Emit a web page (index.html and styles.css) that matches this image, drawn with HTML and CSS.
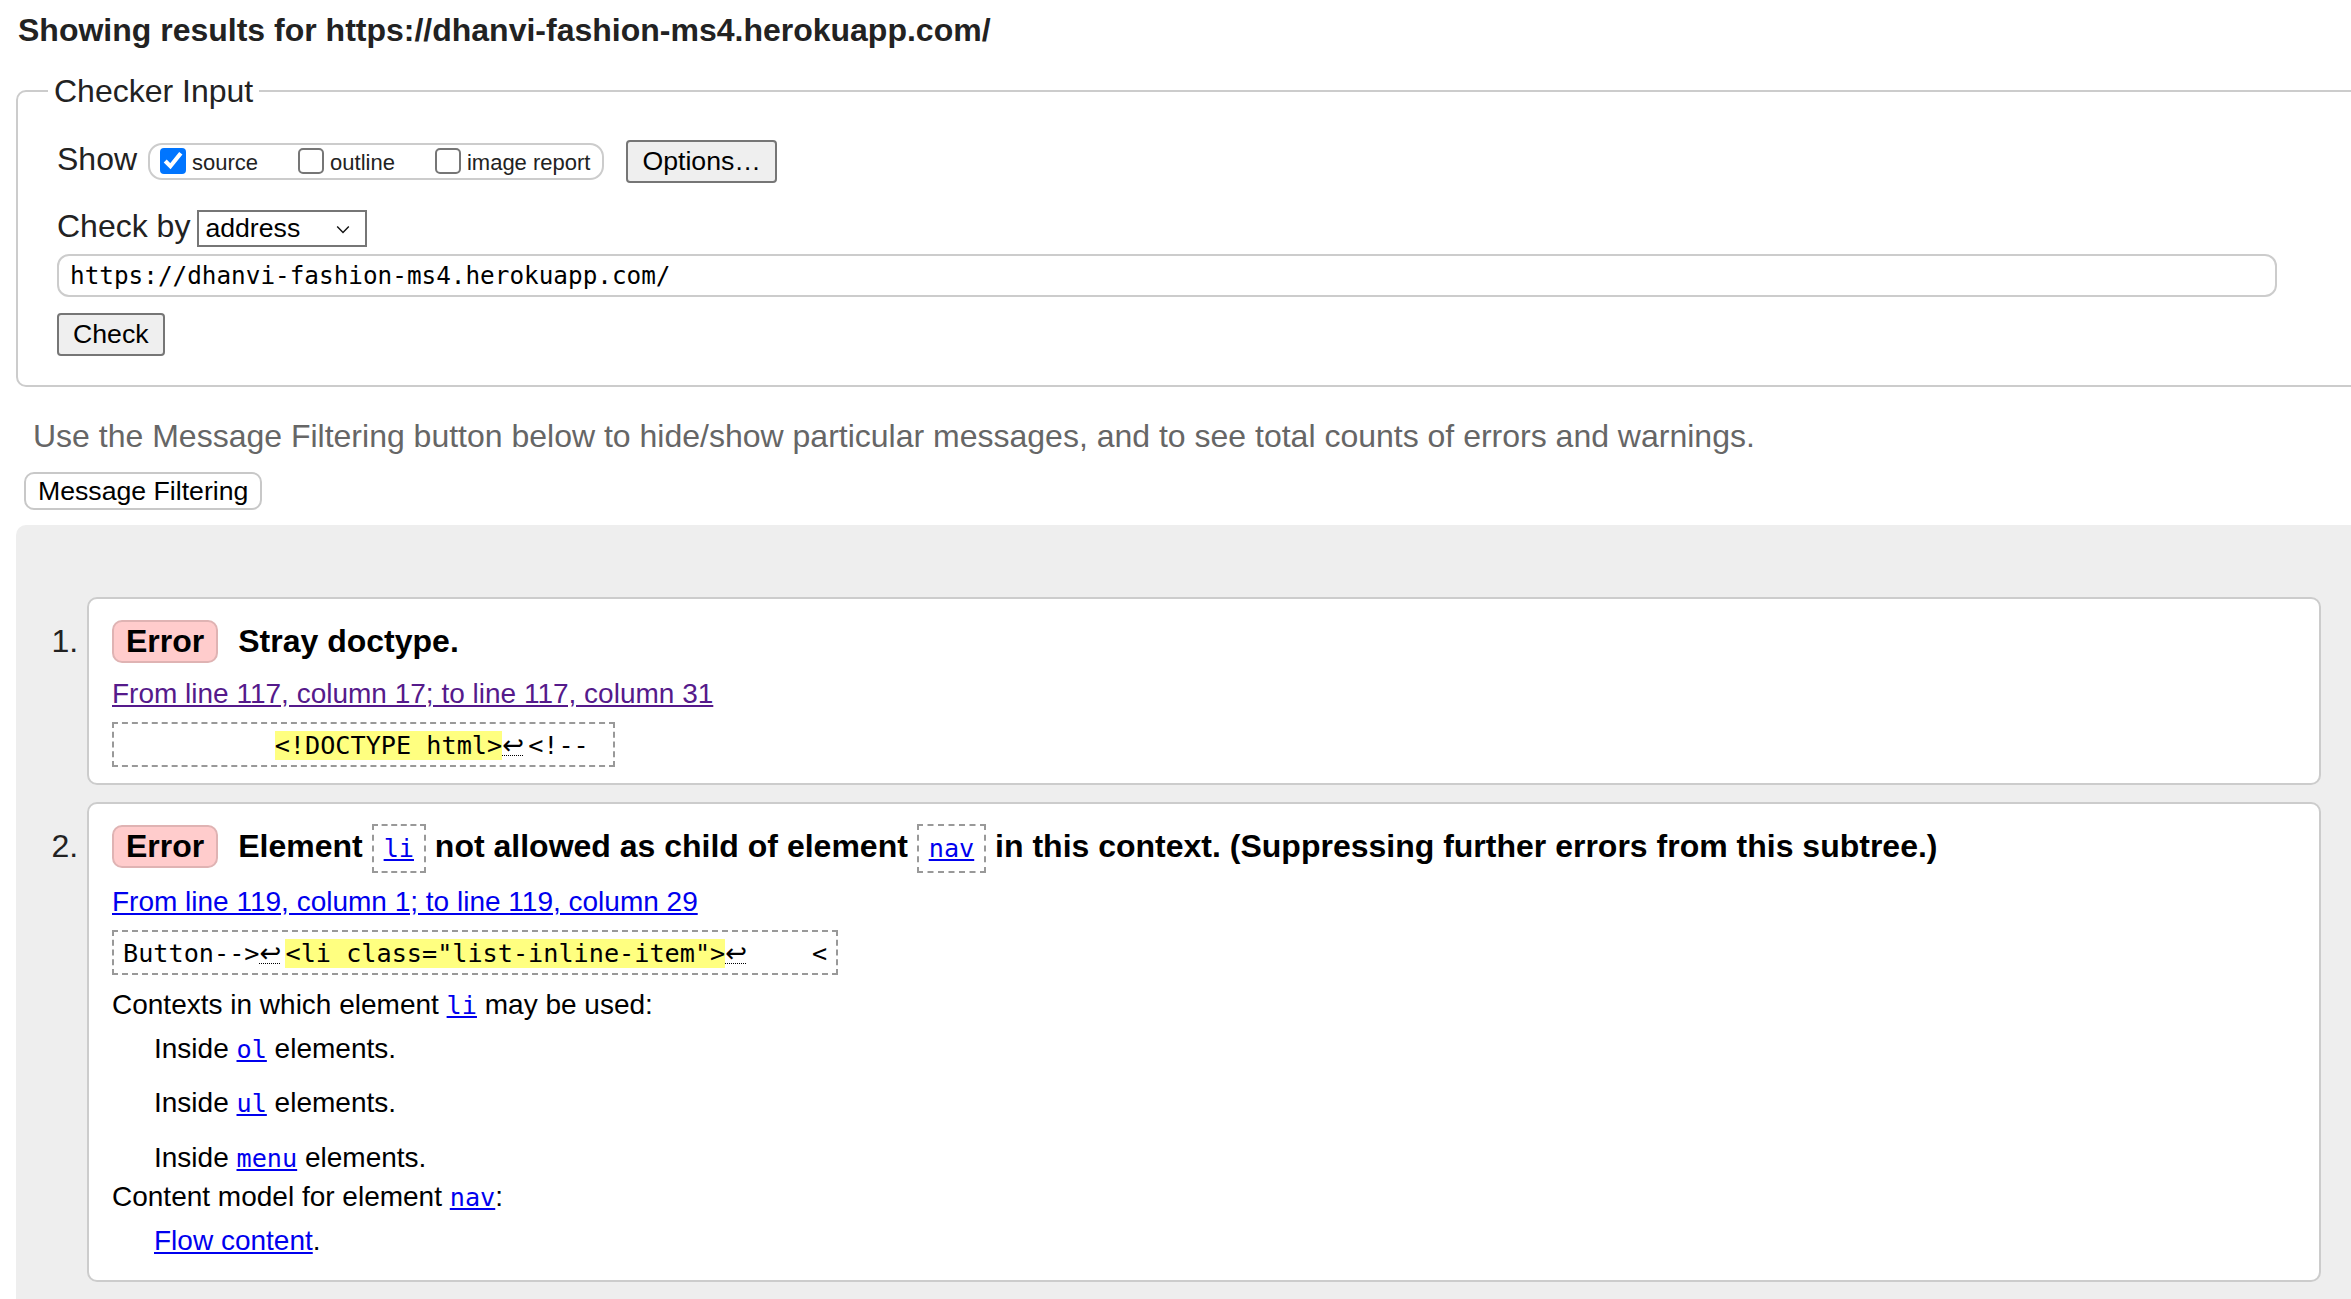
FILE: index.html
```html
<!DOCTYPE html>
<html lang="en">
<head>
<meta charset="utf-8">
<title>Showing results for https://dhanvi-fashion-ms4.herokuapp.com/ - Nu Html Checker</title>
<link rel="stylesheet" href="styles.css">
</head>
<body>
<div class="page">
  <h2 class="title">Showing results for https://dhanvi-fashion-ms4.herokuapp.com/</h2>
  <fieldset class="checker">
    <legend class="legend">Checker Input</legend>
    <div class="row show-row">
      <span class="lbl lbl-show">Show</span>
      <span class="group">
        <label class="opt"><input class="cb" type="checkbox" checked>source</label>
        <label class="opt"><input class="cb" type="checkbox">outline</label>
        <label class="opt"><input class="cb" type="checkbox">image report</label>
      </span>
      <button class="btn btn-options" type="button">Options…</button>
    </div>
    <div class="row by-row">
      <span class="lbl lbl-by">Check by</span>
      <span class="sel-wrap">
        <select class="sel"><option>address</option></select>
        <svg class="sel-arrow" width="7" height="5" viewBox="0 0 7 5" aria-hidden="true"><path d="M0.6 0.8 L3.5 3.8 L6.4 0.8" fill="none" stroke="#111" stroke-width="0.7"/></svg>
      </span>
    </div>
    <input class="url" type="text" value="https://dhanvi-fashion-ms4.herokuapp.com/">
    <div class="check-wrap"><button class="btn" type="button">Check</button></div>
  </fieldset>
  <p class="hint">Use the Message Filtering button below to hide/show particular messages, and to see total counts of errors and warnings.</p>
  <button class="filter-btn" type="button">Message Filtering</button>
  <div class="results">
    <ol class="messages">
      <li class="msg">
        <p class="head"><strong class="badge">Error</strong><span class="msg-text">Stray doctype.</span></p>
        <p class="loc"><a class="loc-link visited" href="#l117">From line 117, column 17; to line 117, column 31</a></p>
        <p class="extract"><code class="ext-code">          <b class="hl">&lt;!DOCTYPE html&gt;</b><abbr class="lf" title="line feed">↩</abbr>&lt;!-- </code></p>
      </li>
      <li class="msg">
        <p class="head"><strong class="badge">Error</strong><span class="msg-text">Element <code class="elbox"><a class="elink" href="#li">li</a></code> not allowed as child of element <code class="elbox"><a class="elink" href="#nav">nav</a></code> in this context. (Suppressing further errors from this subtree.)</span></p>
        <p class="loc"><a class="loc-link" href="#l119">From line 119, column 1; to line 119, column 29</a></p>
        <p class="extract"><code class="ext-code">Button--&gt;<abbr class="lf" title="line feed">↩</abbr><b class="hl">&lt;li class="list-inline-item"&gt;</b><abbr class="lf" title="line feed">↩</abbr>    &lt;</code></p>
        <dl class="details">
          <dt class="dt dt-first">Contexts in which element <a class="mono-link" href="#li">li</a> may be used:</dt>
          <dd class="dd"><p class="dd-p dd-p1">Inside <a class="mono-link" href="#ol">ol</a> elements.</p><p class="dd-p dd-p2">Inside <a class="mono-link" href="#ul">ul</a> elements.</p><p class="dd-p dd-p3">Inside <a class="mono-link" href="#menu">menu</a> elements.</p></dd>
          <dt class="dt dt-second">Content model for element <a class="mono-link" href="#nav">nav</a>:</dt>
          <dd class="dd dd-last"><p class="dd-p dd-p4"><a class="plain-link" href="#flow">Flow content</a>.</p></dd>
        </dl>
      </li>
      <li class="msg msg-more"></li>
    </ol>
  </div>
</div>
</body>
</html>
```
FILE: styles.css
```css
html, body {
  margin: 0;
  padding: 0;
  overflow: hidden;
  background: #fff;
}
body {
  font-family: "Liberation Sans", Arial, sans-serif;
  color: #222;
}
.page {
  zoom: 2;
  width: 1220px;
  padding-left: 8px;
}
.title {
  font-size: 16px;
  font-weight: bold;
  line-height: 18.4px;
  margin: 6px 0 0 1px;
  color: #222;
}
.checker {
  margin: 11.9px 0 0 0;
  border: 1px solid #ccc;
  border-radius: 5px;
  padding: 15.3px 0 14.5px 19.5px;
  min-width: 0;
}
.legend {
  font-size: 16px;
  line-height: 18.4px;
  padding: 0 3px;
  margin-left: -4.5px;
  color: #222;
}
.row {
  display: flex;
  align-items: center;
}
.show-row {
  height: 21.5px;
}
.lbl {
  font-size: 16px;
  line-height: 18.4px;
}
.lbl-show {
  margin-right: 5.5px;
  margin-bottom: 2px;
}
.group {
  display: inline-flex;
  align-items: center;
  box-sizing: border-box;
  height: 18.5px;
  border: 1px solid #ccc;
  border-radius: 7px;
  padding: 0 6px 0 1px;
  font-size: 11px;
  color: #222;
}
.opt {
  display: inline-flex;
  align-items: flex-end;
  margin-right: 16px;
  line-height: 13px;
  padding-top: 1px;
}
.opt:last-child {
  margin-right: 0;
}
.cb {
  margin: 0 3px 1px 4px;
  width: 13px;
  height: 13px;
}
.btn {
  font-family: "Liberation Sans", Arial, sans-serif;
  font-size: 13.333px;
  line-height: 15.33px;
  background: #efefef;
  color: #000;
  border: 1px solid #767676;
  border-radius: 2px;
  padding: 2px 7px;
}
.btn-options {
  margin-left: 11px;
}
.by-row {
  height: 19.5px;
  margin-top: 13px;
}
.lbl-by {
  margin-right: 3.5px;
  margin-bottom: 2px;
}
.sel-wrap {
  position: relative;
  display: inline-block;
  height: 18.5px;
}
.sel {
  appearance: none;
  -webkit-appearance: none;
  display: block;
  font-family: "Liberation Sans", Arial, sans-serif;
  font-size: 13.333px;
  width: 85px;
  height: 18.5px;
  box-sizing: border-box;
  border: 1px solid #767676;
  border-radius: 0;
  background: #fff;
  color: #000;
  padding: 0 0 0 3px;
}
.sel-arrow {
  position: absolute;
  right: 8.5px;
  top: 7.5px;
  pointer-events: none;
}
.url {
  display: block;
  box-sizing: border-box;
  margin-top: 3px;
  width: 1110px;
  height: 21.5px;
  border: 1px solid #ccc;
  border-radius: 6px;
  padding: 0 5.5px;
  font-family: "DejaVu Sans Mono", "Liberation Mono", monospace;
  font-size: 12.17px;
  color: #000;
  background: #fff;
}
.check-wrap {
  margin-top: 8px;
}
.hint {
  font-size: 16px;
  line-height: 18.4px;
  color: #666;
  margin: 15.8px 0 0 0;
  padding-left: 8.5px;
}
.filter-btn {
  display: block;
  margin: 8.3px 0 0 4px;
  font-family: "Liberation Sans", Arial, sans-serif;
  font-size: 13.333px;
  line-height: 15.33px;
  background: #fff;
  color: #000;
  border: 1px solid #c8c8c8;
  border-radius: 5px;
  padding: 1px 6px;
}
.results {
  margin-top: 7.5px;
  background: #eee;
  border-radius: 5px 0 0 0;
}
.messages {
  margin: 0;
  padding: 36px 67.5px 0 35.5px;
  list-style: decimal outside;
}
.msg {
  font-size: 16px;
  color: #222;
  background: #fff;
  border: 1px solid #ccc;
  border-radius: 5px;
  padding: 8px 11.5px 8px 11.5px;
  margin-bottom: 8.5px;
}
.msg-more {
  min-height: 120px;
  list-style: none;
}
.head {
  margin: 0;
  font-size: 16px;
  line-height: 26px;
  font-weight: bold;
  color: #000;
}
.badge {
  display: inline-block;
  background: #fcc;
  border: 1px solid #dfb3b3;
  border-radius: 5px;
  padding: 0.5px 6px;
  line-height: 18.4px;
  margin-right: 10px;
}
.elbox {
  font-family: "DejaVu Sans Mono", "Liberation Mono", monospace;
  font-size: 12.6px;
  font-weight: normal;
  border: 1px dashed #999;
  padding: 4px 5px;
}
.elink, .mono-link {
  color: #00e;
  text-decoration: underline;
}
.mono-link {
  font-family: "DejaVu Sans Mono", "Liberation Mono", monospace;
  font-size: 12.6px;
}
.loc {
  margin: 4.5px 0 0 0;
  font-size: 14px;
  line-height: 18px;
}
.loc-link {
  color: #00e;
}
.loc-link.visited {
  color: #551a8b;
}
.extract {
  margin: 5px 0 0 0;
  width: fit-content;
  border: 1px dashed #999;
  padding: 1.5px 4.5px;
  line-height: 16px;
}
.ext-code {
  font-family: "DejaVu Sans Mono", "Liberation Mono", monospace;
  font-size: 12.6px;
  white-space: pre;
  color: #000;
}
.hl {
  font-weight: normal;
  background: #ffff80;
}
.lf {
  display: inline-block;
  width: 13px;
  text-align: left;
  text-decoration: underline dotted;
  text-decoration-thickness: 0.5px;
  font-family: "DejaVu Sans", sans-serif;
  font-size: 13px;
}
.details {
  margin: 6px 0 0 0;
  font-size: 14px;
  line-height: 18px;
  color: #000;
}
.dt {
  margin: 0;
}
.dt-second {
  margin-top: 1px;
}
.dd {
  margin: 0 0 0 21px;
}
.dd-last {
  margin-bottom: 2.5px;
}
.dd-p {
  margin: 0;
}
.dd-p1 {
  margin-top: 3.5px;
}
.dd-p2 {
  margin-top: 8.5px;
}
.dd-p3 {
  margin-top: 9px;
}
.dd-p4 {
  margin-top: 3.5px;
}
.plain-link {
  color: #00e;
}
```
